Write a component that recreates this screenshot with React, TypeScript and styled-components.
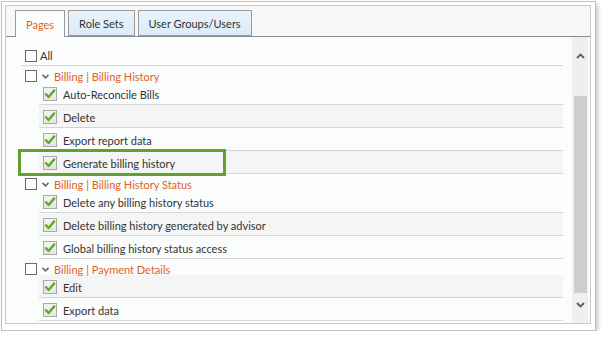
import styled, { createGlobalStyle } from 'styled-components';

const GlobalStyle = createGlobalStyle`
  body {
    margin: 0;
    background: #ffffff;
    font-family: Lato, 'Open Sans', sans-serif;
  }
`;

type Group = {
  title: string;
  items: string[];
};

const groups: Group[] = [
  {
    title: 'Billing | Billing History',
    items: ['Auto-Reconcile Bills', 'Delete', 'Export report data', 'Generate billing history'],
  },
  {
    title: 'Billing | Billing History Status',
    items: [
      'Delete any billing history status',
      'Delete billing history generated by advisor',
      'Global billing history status access',
    ],
  },
  {
    title: 'Billing | Payment Details',
    items: ['Edit', 'Export data'],
  },
];

const tabs = ['Pages', 'Role Sets', 'User Groups/Users'];

const highlighted = 'Generate billing history';

const EmptyBox = () => (
  <svg width="12" height="12" viewBox="0 0 12 12">
    <rect x="0.5" y="0.5" width="11" height="11" fill="#fff" stroke="#6b6b6b" />
  </svg>
);

const CheckedBox = () => (
  <svg width="14" height="14" viewBox="0 0 14 14">
    <defs>
      <linearGradient id="cbg" x1="0" y1="0" x2="0" y2="1">
        <stop offset="0" stopColor="#f4f4f4" />
        <stop offset="1" stopColor="#e4e4e4" />
      </linearGradient>
    </defs>
    <rect x="0.5" y="0.5" width="13" height="13" fill="url(#cbg)" stroke="#a9a9a9" />
    <path d="M3 7.2 L5.6 10 L11.2 3.4" fill="none" stroke="#5cae26" strokeWidth="2.4" strokeLinecap="round" strokeLinejoin="round" />
  </svg>
);

const Chevron = ({ up }: { up?: boolean }) => (
  <svg width="9" height="6" viewBox="0 0 9 6">
    <path
      d={up ? 'M1 5 L4.5 1.5 L8 5' : 'M1 1 L4.5 4.5 L8 1'}
      fill="none"
      stroke="#5c5c5c"
      strokeWidth="1.8"
    />
  </svg>
);

const SmallChevron = () => (
  <svg width="7" height="5" viewBox="0 0 7 5">
    <path d="M0.5 0.8 L3.5 3.8 L6.5 0.8" fill="none" stroke="#6a6a6a" strokeWidth="1.6" />
  </svg>
);

export default function App() {
  let childIndex = 0;
  return (
    <>
      <GlobalStyle />
      <Frame>
        <Panel>
          <TabBar>
            {tabs.map((t, i) => (
              <Tab key={t} $active={i === 0}>
                {t}
              </Tab>
            ))}
          </TabBar>
          <Content>
            <List>
              <AllRow>
                <EmptyBox />
                <span>All</span>
              </AllRow>
              {groups.map((g) => (
                <div key={g.title}>
                  <GroupRow>
                    <EmptyBox />
                    <Toggle>
                      <SmallChevron />
                    </Toggle>
                    <GroupTitle>{g.title}</GroupTitle>
                  </GroupRow>
                  {g.items.map((item) => {
                    childIndex += 1;
                    return (
                      <ItemRow key={item} $shaded={childIndex % 2 === 0}>
                        <CheckedBox />
                        <span>{item}</span>
                        {item === highlighted && <Highlight />}
                      </ItemRow>
                    );
                  })}
                </div>
              ))}
            </List>
            <ScrollBar>
              <ArrowUp>
                <Chevron up />
              </ArrowUp>
              <Thumb />
              <ArrowDown>
                <Chevron />
              </ArrowDown>
            </ScrollBar>
          </Content>
        </Panel>
      </Frame>
    </>
  );
}

const Frame = styled.div`
  box-sizing: border-box;
  margin: 1px 0 0 1px;
  width: 595px;
  height: 330px;
  border: 1px solid #c2c2c2;
  padding: 3px 4px 6px 3px;
  background: #ffffff;
  box-shadow: 2px 3px 4px rgba(0, 0, 0, 0.22);
  display: flex;
`;

const Panel = styled.div`
  flex: 1;
  border: 1px solid #c9c9c9;
  display: flex;
  flex-direction: column;
  min-width: 0;
`;

const TabBar = styled.div`
  height: 30px;
  background: #f8f8f8;
  border-bottom: 1px solid #8c8c8c;
  display: flex;
  align-items: flex-end;
  gap: 3px;
  padding-left: 9px;
`;

const Tab = styled.div<{ $active?: boolean }>`
  box-sizing: border-box;
  height: ${(p) => (p.$active ? '27px' : '26px')};
  margin-bottom: ${(p) => (p.$active ? '-1px' : '0')};
  padding: 1px 10px 0 10px;
  border: 1px solid #9a9a9a;
  border-bottom: ${(p) => (p.$active ? 'none' : '1px solid #9a9a9a')};
  background: ${(p) =>
    p.$active ? '#fbfdfd' : 'linear-gradient(#e9f3fb, #dcecf8)'};
  color: ${(p) => (p.$active ? '#e0621d' : '#333333')};
  font-size: 11px;
  display: flex;
  align-items: center;
`;

const Content = styled.div`
  flex: 1;
  display: flex;
  background: #fbfdfd;
  min-height: 0;
`;

const List = styled.div`
  flex: 1;
  padding: 9px 9px 0 15px;
  overflow: hidden;
  font-size: 11px;
  color: #333333;
`;

const AllRow = styled.div`
  height: 19px;
  border-bottom: 1px solid #d4d4d4;
  display: flex;
  align-items: center;
  gap: 3px;
  padding-left: 4px;
`;

const GroupRow = styled.div`
  box-sizing: border-box;
  height: 16px;
  display: flex;
  align-items: center;
  padding: 4px 0 0 4px;
  position: relative;
  z-index: 1;
`;

const Toggle = styled.span`
  display: flex;
  margin: 0 5px 0 5px;
`;

const GroupTitle = styled.span`
  color: #e0621d;
`;

const ItemRow = styled.div<{ $shaded?: boolean }>`
  position: relative;
  box-sizing: border-box;
  height: 23px;
  margin-left: 18px;
  border-bottom: 1px solid #d6d6d6;
  background: ${(p) => (p.$shaded ? '#f5f5f5' : 'transparent')};
  display: flex;
  align-items: center;
  gap: 6px;
  padding-left: 4px;
  padding-top: 2px;

  span {
    margin-top: 1px;
  }
`;

const Highlight = styled.div`
  position: absolute;
  left: -21px;
  top: -2px;
  width: 208px;
  height: 27px;
  border: 3px solid #64a030;
  box-sizing: border-box;
  pointer-events: none;
`;

const ScrollBar = styled.div`
  width: 16px;
  margin-right: 2px;
  background: #efefef;
  display: flex;
  flex-direction: column;
  align-items: center;
`;

const ArrowUp = styled.div`
  height: 38px;
  display: flex;
  align-items: center;
  justify-content: center;
`;

const Thumb = styled.div`
  margin-top: 21px;
  width: 13px;
  height: 197px;
  background: #cdcdcd;
`;

const ArrowDown = styled.div`
  flex: 1;
  display: flex;
  justify-content: center;
  padding-top: 9px;
`;
